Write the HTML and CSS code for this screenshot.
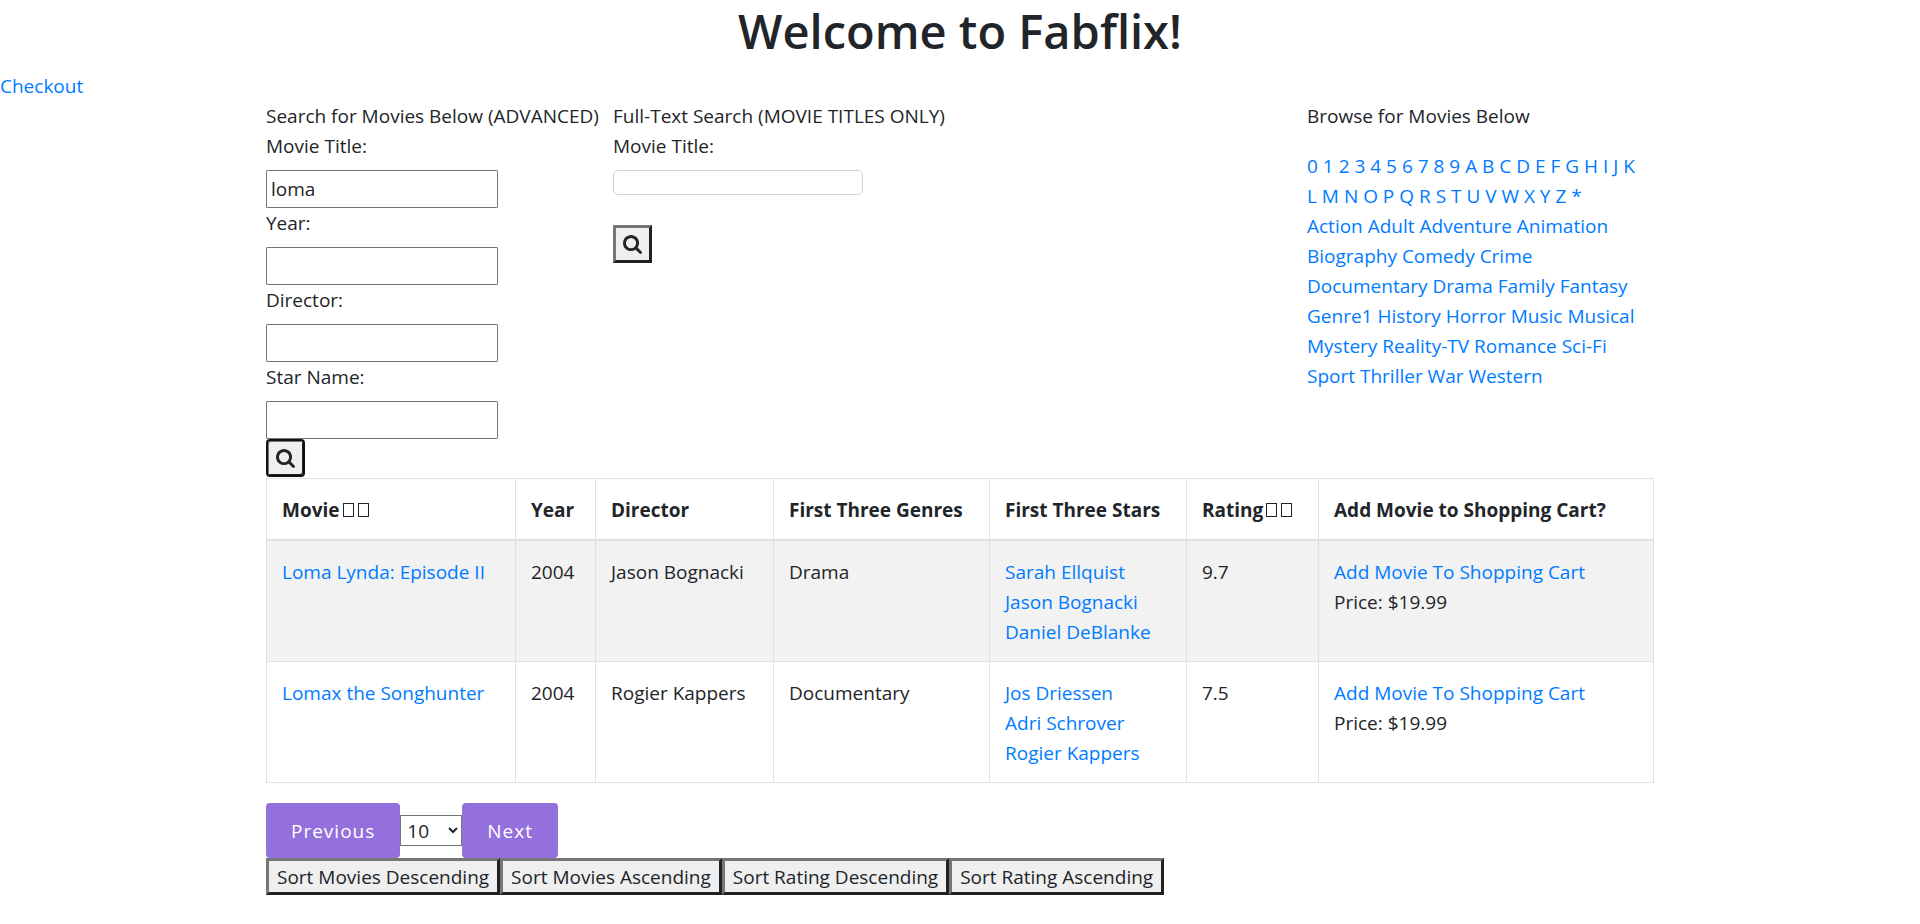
FILE: index.html
```html
<!DOCTYPE html>
<html lang="en">
<head>
<meta charset="utf-8">
<title>Fabflix</title>
<link rel="stylesheet" href="styles.css">
</head>
<body>
<svg class="sprite" aria-hidden="true"><symbol id="search" viewBox="0 128 1664 1664"><path d="M1152 832q0-185-131.500-316.500t-316.500-131.500-316.500 131.500-131.500 316.500 131.500 316.500 316.500 131.500 316.500-131.500 131.500-316.500zm512 832q0 52-38 90t-90 38q-54 0-90-38l-343-342q-179 124-399 124-143 0-273.500-55.500t-225-150-150-225-55.500-273.500 55.500-273.500 150-225 225-150 273.500-55.500 273.500 55.500 225 150 150 225 55.500 273.500q0 220-124 399l343 343q37 37 37 90z"/></symbol></svg>
<h1 class="title">Welcome to Fabflix!</h1>
<nav class="top-nav"><a href="#">Checkout</a></nav>
<main class="container">
  <div class="panels">
    <form class="panel">
      <div>Search for Movies Below (ADVANCED)</div>
      <label for="title">Movie Title:</label>
      <input class="field" id="title" type="text" value="loma">
      <label for="year">Year:</label>
      <input class="field" id="year" type="text">
      <label for="director">Director:</label>
      <input class="field" id="director" type="text">
      <label for="star">Star Name:</label>
      <input class="field" id="star" type="text">
      <button class="icon-button current" type="button" aria-label="Search"><svg class="icon"><use href="#search"/></svg></button>
    </form>
    <form class="panel full-text">
      <div>Full-Text Search (MOVIE TITLES ONLY)</div>
      <label for="full">Movie Title:</label>
      <input class="field-round" id="full" type="text">
      <button class="icon-button" type="button" aria-label="Full-text search"><svg class="icon"><use href="#search"/></svg></button>
    </form>
    <section class="panel browse">
      <div class="browse-heading">Browse for Movies Below</div>
      <div><a href="#">0</a> <a href="#">1</a> <a href="#">2</a> <a href="#">3</a> <a href="#">4</a> <a href="#">5</a> <a href="#">6</a> <a href="#">7</a> <a href="#">8</a> <a href="#">9</a> <a href="#">A</a> <a href="#">B</a> <a href="#">C</a> <a href="#">D</a> <a href="#">E</a> <a href="#">F</a> <a href="#">G</a> <a href="#">H</a> <a href="#">I</a> <a href="#">J</a> <a href="#">K</a><br>
      <a href="#">L</a> <a href="#">M</a> <a href="#">N</a> <a href="#">O</a> <a href="#">P</a> <a href="#">Q</a> <a href="#">R</a> <a href="#">S</a> <a href="#">T</a> <a href="#">U</a> <a href="#">V</a> <a href="#">W</a> <a href="#">X</a> <a href="#">Y</a> <a href="#">Z</a> <a href="#">*</a></div>
      <div><a href="#">Action</a> <a href="#">Adult</a> <a href="#">Adventure</a> <a href="#">Animation</a><br>
      <a href="#">Biography</a> <a href="#">Comedy</a> <a href="#">Crime</a><br>
      <a href="#">Documentary</a> <a href="#">Drama</a> <a href="#">Family</a> <a href="#">Fantasy</a><br>
      <a href="#">Genre1</a> <a href="#">History</a> <a href="#">Horror</a> <a href="#">Music</a> <a href="#">Musical</a><br>
      <a href="#">Mystery</a> <a href="#">Reality-TV</a> <a href="#">Romance</a> <a href="#">Sci-Fi</a><br>
      <a href="#">Sport</a> <a href="#">Thriller</a> <a href="#">War</a> <a href="#">Western</a></div>
    </section>
  </div>
  <table class="movies">
    <colgroup><col class="c-movie"><col class="c-year"><col class="c-director"><col class="c-genres"><col class="c-stars"><col class="c-rating"><col></colgroup>
    <thead>
      <tr><th>Movie<span class="sort-box"></span><span class="sort-box"></span></th><th>Year</th><th>Director</th><th>First Three Genres</th><th>First Three Stars</th><th>Rating<span class="sort-box"></span><span class="sort-box"></span></th><th>Add Movie to Shopping Cart?</th></tr>
    </thead>
    <tbody>
      <tr><td><a href="#">Loma Lynda: Episode II</a></td><td>2004</td><td>Jason Bognacki</td><td>Drama</td><td><a href="#">Sarah Ellquist</a><br><a href="#">Jason Bognacki</a><br><a href="#">Daniel DeBlanke</a></td><td>9.7</td><td><a href="#">Add Movie To Shopping Cart</a><br>Price: $19.99</td></tr>
      <tr><td><a href="#">Lomax the Songhunter</a></td><td>2004</td><td>Rogier Kappers</td><td>Documentary</td><td><a href="#">Jos Driessen</a><br><a href="#">Adri Schrover</a><br><a href="#">Rogier Kappers</a></td><td>7.5</td><td><a href="#">Add Movie To Shopping Cart</a><br>Price: $19.99</td></tr>
    </tbody>
  </table>
  <div class="pager">
    <button class="page-button" type="button">Previous</button>
    <select class="page-size" aria-label="Movies per page"><option>10</option><option>25</option><option>50</option><option>100</option></select>
    <button class="page-button" type="button">Next</button>
  </div>
  <div class="sorts">
    <button class="sort-button" type="button">Sort Movies Descending</button>
    <button class="sort-button" type="button">Sort Movies Ascending</button>
    <button class="sort-button" type="button">Sort Rating Descending</button>
    <button class="sort-button" type="button">Sort Rating Ascending</button>
  </div>
</main>
</body>
</html>
```
FILE: styles.css
```css
*, *::before, *::after { box-sizing: border-box; }
body {
  margin: 0;
  background: #fff;
  color: #212529;
  font-family: "Open Sans", "Noto Sans", sans-serif;
  font-size: 19px;
  line-height: 30px;
}
a { color: #007bff; text-decoration: none; }
a:hover { text-decoration: underline; }
input, button, select { font: inherit; color: inherit; margin: 0; }
.sprite { display: none; }
.title {
  margin: 0 0 10px;
  padding-top: 1px;
  font-size: 47px;
  font-weight: 600;
  line-height: 60px;
  text-align: center;
}
.container { max-width: 1388px; margin: 0 auto; }
.panels { display: grid; grid-template-columns: 1fr 2fr 1fr; padding-bottom: 1px; }
.panel { display: flex; flex-direction: column; align-items: flex-start; white-space: nowrap; min-width: 0; }
.panel label { margin-bottom: 9px; }
.field {
  width: 232px;
  height: 38px;
  padding: 2px 4px;
  border: 1px solid #767676;
  border-radius: 1px;
  background: #fff;
}
.field-round {
  width: 250px;
  height: 25px;
  margin-bottom: 30px;
  border: 1px solid #ced4da;
  border-radius: 5px;
  background: #fff;
}
.icon-button {
  display: grid;
  place-items: center;
  width: 39px;
  height: 38px;
  padding: 0;
  border: 3px solid;
  border-color: #767676 #212121 #212121 #767676;
  background: #efefef;
}
.icon-button.current {
  border: 2px solid #101010;
  border-radius: 4px;
  box-shadow: inset 1px 1px #767676, inset -1px -1px #212121;
}
.icon { width: 19px; height: 19px; fill: #212529; }
.browse-heading { margin-bottom: 20px; }
.movies {
  width: 100%;
  margin-bottom: 20px;
  border-collapse: collapse;
  table-layout: fixed;
}
.movies th, .movies td {
  padding: 16px 15px 14px;
  border: 1px solid #dee2e6;
  text-align: left;
  vertical-align: top;
  white-space: nowrap;
}
.movies th { border-bottom-width: 2px; font-weight: 700; }
.movies tbody tr:nth-child(odd) { background: #f2f2f2; }
.c-movie { width: 249px; }
.c-year { width: 80px; }
.c-director { width: 178px; }
.c-genres { width: 216px; }
.c-stars { width: 197px; }
.c-rating { width: 132px; }
.sort-box {
  display: inline-block;
  width: 11px;
  height: 14px;
  margin: 0 1px 0 3px;
  border: 1px solid #212529;
}
.pager { display: flex; align-items: center; }
.page-button {
  height: 55px;
  padding: 0 25px;
  border: 0;
  border-radius: 4px;
  background: #9370db;
  color: #fff;
  font-weight: 500;
  letter-spacing: 1px;
}
.page-size {
  width: 62px;
  height: 31px;
  padding: 0 0 0 2px;
  border: 1px solid #767676;
  background: #fff;
}
.sorts { display: flex; }
.sort-button {
  height: 37px;
  padding: 0 8px;
  border: 3px solid;
  border-color: #767676 #212121 #212121 #767676;
  background: #efefef;
  white-space: nowrap;
}
```
